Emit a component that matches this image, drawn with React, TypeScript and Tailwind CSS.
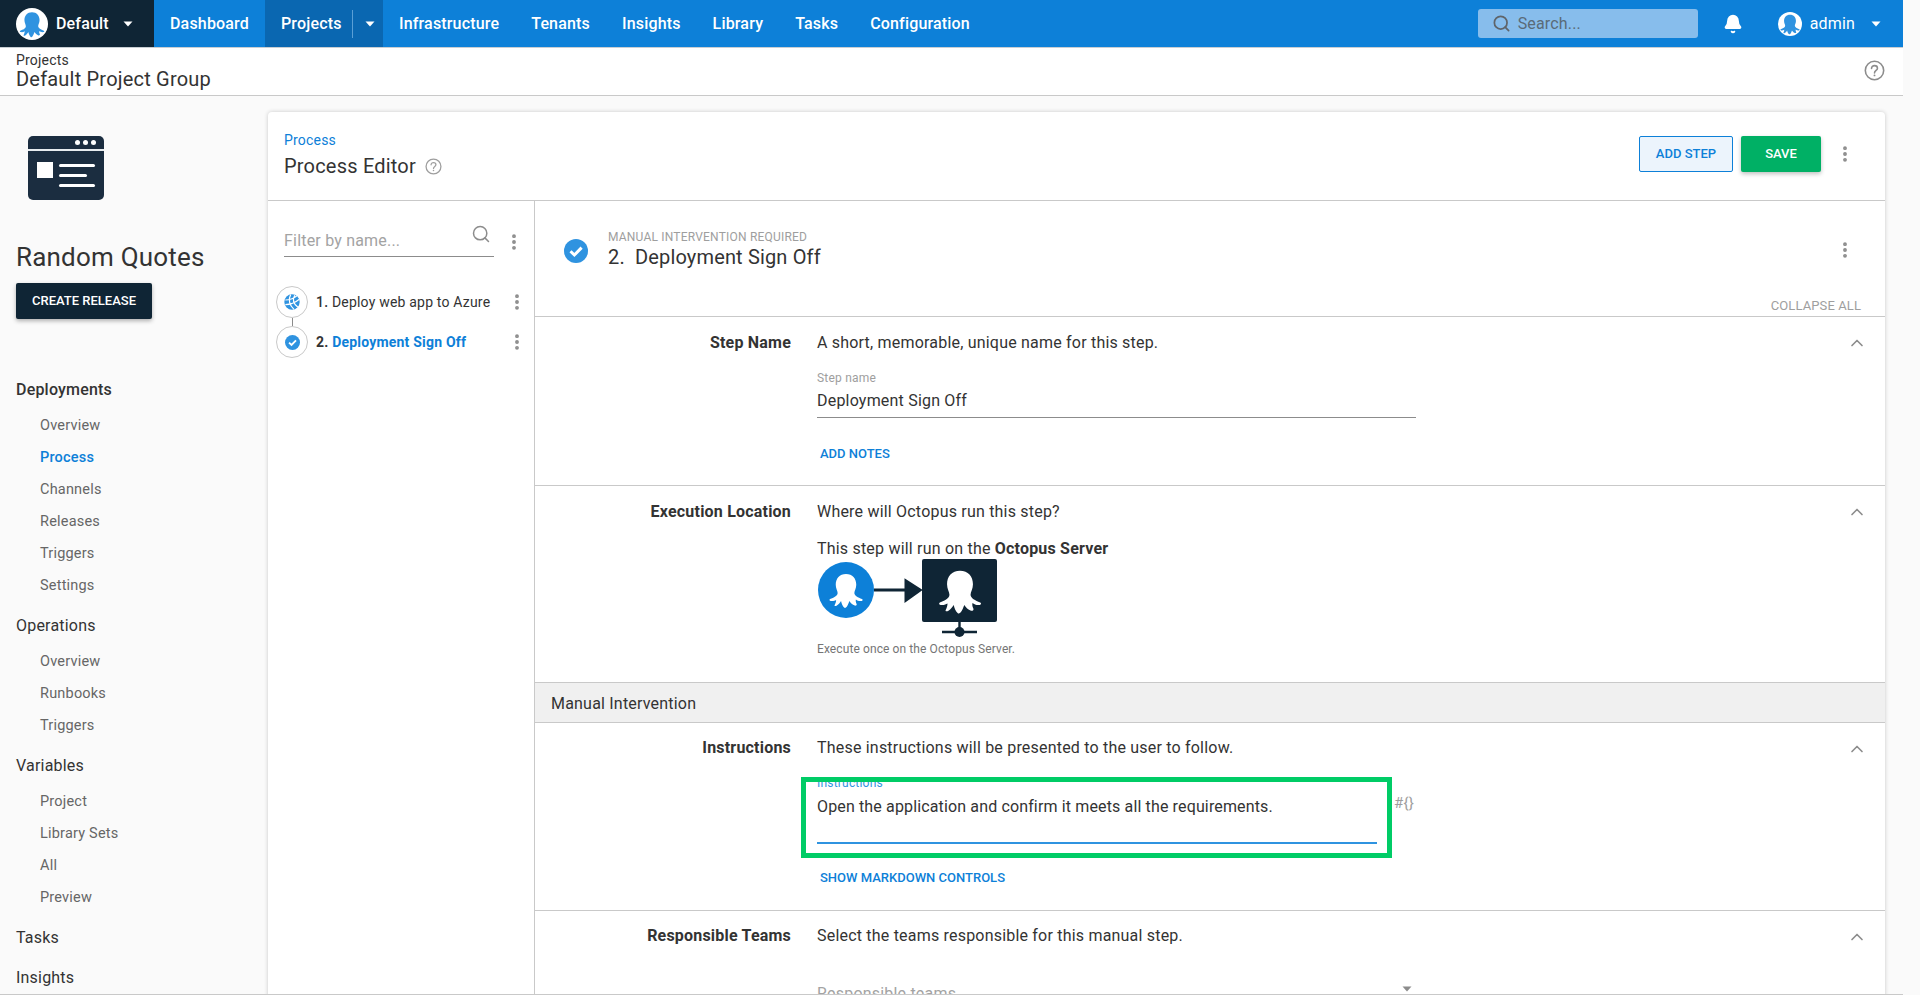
import { Bell, ChevronUp, Search, EllipsisVertical } from 'lucide-react';

const OCTO =
  'M50 8 C33 8 23 20 23 36 C23 46 28 52 28 58 C28 66 18 70 8 74 C5 76 7 79 10 79 C16 80 20 78 24 76 C24 81 22 86 20 90 C19 93 23 93 26 91 C31 88 34 83 37 79 C38 85 41 92 45 96 C47 98 50 97 52 94 C55 90 57 84 59 79 C62 84 67 89 73 91 C76 92 79 90 78 87 C76 83 75 79 76 75 C80 78 85 80 91 79 C94 79 95 75 92 74 C82 70 72 65 72 58 C72 52 77 46 77 36 C77 20 67 8 50 8 Z';

function Octo({ className, fill }: { className?: string; fill: string }) {
  return (
    <svg viewBox="0 0 100 100" className={className}>
      <path d={OCTO} fill={fill} />
    </svg>
  );
}

function Caret({ className }: { className?: string }) {
  return (
    <svg viewBox="0 0 10 6" className={className}>
      <path d="M0.5 0.5 H9.5 L5 5.5 Z" fill="currentColor" />
    </svg>
  );
}

function HelpIcon({ className }: { className?: string }) {
  return (
    <svg viewBox="0 0 24 24" className={className} fill="none" stroke="currentColor" strokeWidth="1.8">
      <circle cx="12" cy="12" r="10.5" />
      <path d="M8.6 9.6 C8.6 7.6 10.1 6.4 12 6.4 C13.9 6.4 15.4 7.6 15.4 9.4 C15.4 11.8 12 12 12 14.8" strokeLinecap="round" />
      <circle cx="12" cy="17.6" r="1.1" fill="currentColor" stroke="none" />
    </svg>
  );
}

function Kebab({ className }: { className?: string }) {
  return <EllipsisVertical className={className} size={20} strokeWidth={2.6} color="#8c8c8c" />;
}

function CheckCircle({ className }: { className?: string }) {
  return (
    <svg viewBox="0 0 24 24" className={className}>
      <circle cx="12" cy="12" r="12" fill="#2f93e0" />
      <path d="M6.5 12.2 L10.4 16 L17.6 8.6" fill="none" stroke="#fff" strokeWidth="3" />
    </svg>
  );
}

function GlobeIcon({ className }: { className?: string }) {
  return (
    <svg viewBox="0 0 24 24" className={className}>
      <circle cx="12" cy="12" r="11.5" fill="#2f93e0" />
      <path d="M2 9 C8 9 14 7 19 3 M2 16 C9 16 17 13 23 8 M10 1 C6 8 8 17 15 23 M16 2 C13 8 14 15 21 20" fill="none" stroke="#fff" strokeWidth="1.8" />
    </svg>
  );
}

const navItems = ['Infrastructure', 'Tenants', 'Insights', 'Library', 'Tasks', 'Configuration'];

const sideGroups = [
  { title: 'Deployments', bold: true, items: ['Overview', 'Process', 'Channels', 'Releases', 'Triggers', 'Settings'] },
  { title: 'Operations', items: ['Overview', 'Runbooks', 'Triggers'] },
  { title: 'Variables', items: ['Project', 'Library Sets', 'All', 'Preview'] },
  { title: 'Tasks', items: [] },
  { title: 'Insights', items: [] },
];

function TopBar() {
  return (
    <div className="flex h-12 shrink-0 items-center border-b border-[#c8ced3] bg-[#0d80d8] text-[16px] font-medium tracking-[0.17px] text-white">
      <div className="flex h-full w-[154px] items-center bg-[#0f2535] pl-4">
        <div className="flex h-8 w-8 items-center justify-center rounded-full bg-white">
          <Octo className="h-7 w-7" fill="#2f93e0" />
        </div>
        <span className="ml-[8px]">Default</span>
        <Caret className="ml-[14px] h-[6px] w-[10px]" />
      </div>
      <div className="px-4">Dashboard</div>
      <div className="flex h-full w-[118px] items-center bg-[#0a67b1] pl-4">
        <span>Projects</span>
        <div className="ml-[10px] h-[28px] w-px bg-[#5a9fd6]" />
        <Caret className="ml-[12px] h-[6px] w-[10px]" />
      </div>
      {navItems.map((item) => (
        <div key={item} className="px-4">
          {item}
        </div>
      ))}
      <div className="ml-auto flex h-[29px] w-[220px] items-center rounded-[3px] bg-[#87bdec] pl-[14px] font-normal text-[#5a6b78]">
        <Search size={19} strokeWidth={2.2} color="#5f6469" />
        <span className="ml-[7px]">Search...</span>
      </div>
      <Bell size={20} className="ml-[25px]" fill="white" />
      <div className="ml-[35px] flex h-6 w-6 items-center justify-center rounded-full bg-white">
        <Octo className="h-[22px] w-[22px]" fill="#2f93e0" />
      </div>
      <span className="ml-2 font-normal">admin</span>
      <Caret className="ml-4 mr-[22px] h-[6px] w-[10px]" />
    </div>
  );
}

function PageHeader() {
  return (
    <div className="flex h-12 shrink-0 items-center justify-between border-b border-[#c9c9c9] bg-white pl-4 pr-[18px]">
      <div className="-mt-[2px]">
        <div className="text-[14px] leading-[16px] text-[#333]">Projects</div>
        <div className="text-[20px] leading-[22px] text-[#333]">Default Project Group</div>
      </div>
      <HelpIcon className="-mt-[3px] h-[21px] w-[21px] text-[#8c8c8c]" />
    </div>
  );
}

function Sidebar() {
  return (
    <div className="w-[268px] shrink-0 px-4 pt-[40px]">
      <div className="ml-3 flex h-[64px] w-[76px] flex-col overflow-hidden rounded-[5px] bg-[#1b2d40]">
        <div className="box-content flex h-[13px] items-center justify-end gap-[3px] border-b-[2px] border-[#e8ecef] pr-[8px]">
          <span className="h-[5px] w-[5px] rounded-full bg-white" />
          <span className="h-[5px] w-[5px] rounded-full bg-white" />
          <span className="h-[5px] w-[5px] rounded-full bg-white" />
        </div>
        <div className="flex pl-[9px] pt-[11px]">
          <div className="h-[16px] w-[16px] bg-white" />
          <div className="ml-[6px] flex flex-col gap-[7px] pt-[2px]">
            <div className="h-[3px] w-[36px] rounded-full bg-white" />
            <div className="h-[3px] w-[28px] rounded-full bg-white" />
            <div className="h-[3px] w-[36px] rounded-full bg-white" />
          </div>
        </div>
      </div>
      <div className="mt-[41px] text-[26px] leading-[32px] text-[#333]">Random Quotes</div>
      <button className="mt-[10px] block h-9 w-[136px] rounded-[2px] bg-[#0f2535] text-[13px] font-medium tracking-normal text-white shadow-[0_2px_4px_rgba(0,0,0,0.3)]">
        CREATE RELEASE
      </button>
      <div className="mt-[59px]">
        {sideGroups.map((g) => (
          <div key={g.title} className={g.items.length > 0 ? 'mb-[12px]' : 'mb-[8px]'}>
            <div className={`h-[32px] text-[16px] leading-[24px] text-[#333] ${g.bold ? 'font-medium' : ''}`}>{g.title}</div>
            {g.items.map((item) => (
              <div
                key={g.title + item}
                className={`ml-6 h-[32px] text-[14.5px] leading-[32px] ${item === 'Process' ? 'font-medium text-[#0d80d8]' : 'text-[#666]'}`}
              >
                {item}
              </div>
            ))}
          </div>
        ))}
      </div>
    </div>
  );
}

function StepList() {
  return (
    <div className="w-[267px] shrink-0 border-r border-[#c9c9c9] pl-2 pt-[19px]">
      <div className="flex items-start">
        <div className="ml-2 flex h-[37px] w-[210px] items-start justify-between border-b border-[#8c8c8c]">
          <span className="mt-[11px] text-[16px] leading-[20px] text-[#a3a3a3]">Filter by name...</span>
          <Search size={20} className="mr-[3px] mt-[4px]" strokeWidth={1.8} color="#8c8c8c" />
        </div>
        <Kebab className="ml-[10px] mt-[12px]" />
      </div>
      <div className="mt-[29px]">
        <div className="flex h-8 items-center">
          <div className="flex h-8 w-8 items-center justify-center rounded-full border border-[#c9c9c9]">
            <GlobeIcon className="h-[16px] w-[16px]" />
          </div>
          <span className="ml-2 w-[192px] text-[14px] text-[#333]">
            <span className="font-medium">1.</span> Deploy web app to Azure
          </span>
          <Kebab className="-ml-[1px]" />
        </div>
        <div className="ml-[15.5px] h-2 w-px bg-[#8c8c8c]" />
        <div className="flex h-8 items-center">
          <div className="flex h-8 w-8 items-center justify-center rounded-full border border-[#c9c9c9]">
            <CheckCircle className="h-[15px] w-[15px]" />
          </div>
          <span className="ml-2 w-[192px] text-[14px] font-bold text-[#333]">
            2. <span className="text-[#0d80d8]">Deployment Sign Off</span>
          </span>
          <Kebab className="-ml-[1px]" />
        </div>
      </div>
    </div>
  );
}

function Section({ label, hint, pad, children, className }: { label: string; hint: string; pad: string; children?: React.ReactNode; className: string }) {
  return (
    <div className={`flex shrink-0 border-b border-[#c9c9c9] ${className}`}>
      <div className={`w-[256px] shrink-0 text-right text-[16px] font-bold leading-[24px] text-[#333] ${pad}`}>{label}</div>
      <div className={`ml-[26px] min-w-0 flex-1 ${pad}`}>
        <div className="text-[16px] leading-[24px] text-[#333]">{hint}</div>
        {children}
      </div>
      <ChevronUp size={20} className="mr-[18px] mt-[16px] shrink-0" strokeWidth={2} color="#8c8c8c" />
    </div>
  );
}

function OctoServerDiagram() {
  return (
    <div className="-mt-[2px] flex h-[78px] items-start pl-[1px]">
      <div className="mt-[3px] flex h-[56px] w-[56px] shrink-0 items-center justify-center rounded-full bg-[#0d80d8]">
        <Octo className="h-[38px] w-[38px]" fill="#fff" />
      </div>
      <svg viewBox="0 0 48 78" className="h-[78px] w-[48px] shrink-0">
        <path d="M0 31 H34 M32 22 L46 31 L32 41 Z" stroke="#0f2535" strokeWidth="3" fill="#0f2535" />
      </svg>
      <div className="relative h-[63px] w-[75px] shrink-0 rounded-[2px] bg-[#0f2535]">
        <div className="flex h-full items-center justify-center">
          <Octo className="h-[48px] w-[48px]" fill="#fff" />
        </div>
        <svg viewBox="0 0 40 18" className="absolute left-[18px] top-[63px] h-[18px] w-[40px]">
          <path d="M19.5 0 V10 M2 10 H37" stroke="#0f2535" strokeWidth="2.4" />
          <circle cx="19.5" cy="10" r="5" fill="#0f2535" />
        </svg>
      </div>
    </div>
  );
}

function Editor() {
  return (
    <div className="flex min-w-0 flex-1 flex-col">
      <div className="relative h-[116px] shrink-0 border-b border-[#c9c9c9]">
        <div className="flex pl-[29px] pt-[12px]">
          <CheckCircle className="mt-[26px] h-[24px] w-[24px] shrink-0" />
          <div className="ml-[20px] pt-[17px]">
            <div className="text-[12px] leading-[14px] text-[#9e9e9e]">MANUAL INTERVENTION REQUIRED</div>
            <div className="-mt-[1px] text-[20px] leading-[28px] tracking-[0.15px] text-[#333]">
              2.&nbsp; Deployment Sign Off
            </div>
          </div>
          <Kebab className="ml-auto mr-[30px] mt-[27px]" />
        </div>
        <div className="absolute bottom-[2px] right-[24px] text-[13px] leading-[16px] tracking-[0.1px] text-[#9e9e9e]">COLLAPSE ALL</div>
      </div>
      <Section label="Step Name" hint="A short, memorable, unique name for this step." pad="pt-[14px]" className="h-[169px]">
        <div className="mt-[16px] w-[599px] border-b border-[#8c8c8c]">
          <div className="text-[12px] leading-[14px] text-[#9e9e9e]">Step name</div>
          <div className="mt-[4px] h-[28px] text-[16px] leading-[24px] text-[#333]">Deployment Sign Off</div>
        </div>
        <div className="ml-[3px] mt-[28px] text-[13px] font-medium leading-[16px] tracking-normal text-[#0d80d8]">ADD NOTES</div>
      </Section>
      <Section label="Execution Location" hint="Where will Octopus run this step?" pad="pt-[14px]" className="h-[197px]">
        <div className="mt-[13px] text-[16px] leading-[24px] text-[#333]">
          This step will run on the <span className="font-bold">Octopus Server</span>
        </div>
        <OctoServerDiagram />
        <div className="mt-[5px] text-[12px] leading-[14px] tracking-[0.1px] text-[#757575]">Execute once on the Octopus Server.</div>
      </Section>
      <div className="flex h-[40px] shrink-0 items-center border-b border-[#c9c9c9] bg-[#f0f0f0] pl-4 pt-[3px] text-[16px] text-[#333]">
        Manual Intervention
      </div>
      <Section label="Instructions" hint="These instructions will be presented to the user to follow." pad="pt-[13px]" className="h-[188px]">
        <div className="flex items-start">
          <div className="-ml-[16px] mt-[17px] h-[81px] w-[591px] shrink-0 overflow-hidden border-[5px] border-[#00cc66] pl-[11px] pr-[10px]">
            <div className="-mt-[6px] text-[12px] leading-[14px] text-[#2f93e0]">Instructions</div>
            <div className="mt-[5px] text-[16px] leading-[24px] tracking-[0.14px] text-[#333]">Open the application and confirm it meets all the requirements.</div>
            <div className="mt-[23px] h-[2px] bg-[#2f93e0]" />
          </div>
          <div className="ml-[2px] mt-[33px] text-[15px] leading-[20px] text-[#9e9e9e]">#{'{}'}</div>
        </div>
        <div className="ml-[3px] mt-[12px] text-[13px] font-medium leading-[16px] tracking-normal text-[#0d80d8]">SHOW MARKDOWN CONTROLS</div>
      </Section>
      <Section label="Responsible Teams" hint="Select the teams responsible for this manual step." pad="pt-[13px]" className="h-[120px] border-b-0">
        <div className="mt-[36px] flex w-[599px] items-start justify-between">
          <span className="text-[16px] leading-[20px] text-[#a3a3a3]">Responsible teams</span>
          <Caret className="mr-[4px] mt-[2px] h-[6px] w-[10px] text-[#8c8c8c]" />
        </div>
      </Section>
    </div>
  );
}

export default function App() {
  return (
    <div className="h-[995px] w-full overflow-hidden bg-[#fafafa] font-['Roboto',sans-serif] tracking-[0.2px]">
      <div className="relative flex h-[995px] w-[1903px] flex-col overflow-hidden border-b border-[#c9c9c9]">
        <TopBar />
        <PageHeader />
        <div className="flex min-h-0 flex-1">
          <Sidebar />
          <div className="mt-4 flex h-[900px] w-[1617px] flex-col rounded-t-[4px] bg-white shadow-[0_0_4px_rgba(0,0,0,0.2)]">
            <div className="flex h-[89px] shrink-0 justify-between border-b border-[#c9c9c9] pl-4 pr-[30px]">
              <div>
                <div className="pt-[18px] text-[14px] leading-[20px] text-[#0d80d8]">Process</div>
                <div className="mt-[2px] flex items-center">
                  <span className="text-[20px] leading-[28px] text-[#333]">Process Editor</span>
                  <HelpIcon className="ml-[9px] h-[17px] w-[17px] text-[#9e9e9e]" />
                </div>
              </div>
              <div className="flex items-start pt-[24px]">
                <button className="h-9 w-[94px] rounded-[2px] border border-[#0d80d8] bg-[#ecf4fc] text-[13px] font-medium tracking-normal text-[#0d80d8]">ADD STEP</button>
                <button className="ml-2 h-9 w-[80px] rounded-[2px] bg-[#00b065] text-[13px] font-medium tracking-normal text-white shadow-[0_2px_4px_rgba(0,0,0,0.25)]">SAVE</button>
                <Kebab className="ml-[14px] mt-[8px]" />
              </div>
            </div>
            <div className="flex min-h-0 flex-1">
              <StepList />
              <Editor />
            </div>
          </div>
        </div>
      </div>
    </div>
  );
}
